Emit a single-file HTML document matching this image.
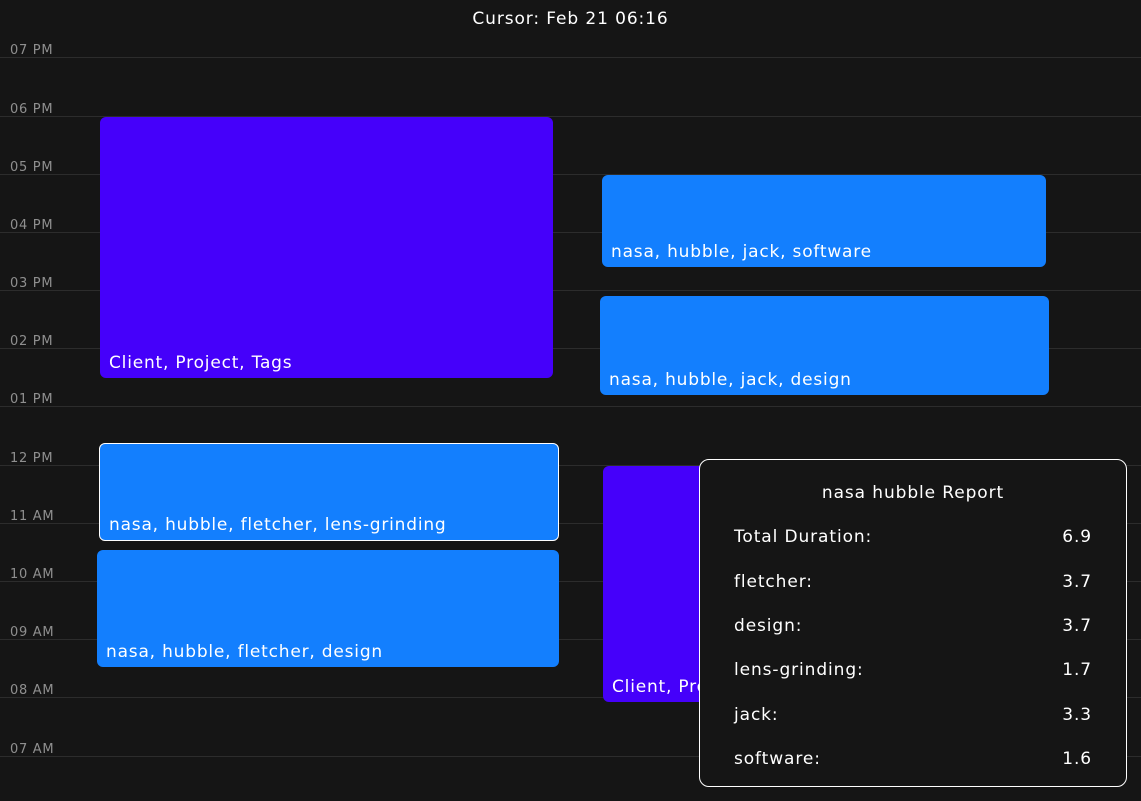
<!DOCTYPE html>
<html><head><style>
body{margin:0;width:1141px;height:801px;background:#151515;overflow:hidden;position:relative;font-family:"DejaVu Sans","Liberation Sans",sans-serif;}
.t{position:absolute;left:0;width:1141px;top:9px;text-align:center;color:#fff;font-size:17px;letter-spacing:0.9px;}
.l{position:absolute;left:0;width:1141px;height:1px;background:#2c2c2c;}
.lb{position:absolute;left:10px;color:#8f8f8f;font-size:13px;letter-spacing:0.7px;}
.b{position:absolute;border-radius:6px;color:#fff;font-size:17px;box-sizing:border-box;letter-spacing:0.8px;}
.b span{position:absolute;left:9px;bottom:5px;white-space:nowrap;}
.p{background:#4500fa}.c{background:#137ffe}
.tip{position:absolute;left:699px;top:459px;width:428px;height:328px;box-sizing:border-box;border:1px solid #fff;border-radius:10px;background:#151515;color:#fff;font-size:17px;letter-spacing:0.9px;}
.r{position:absolute;left:34px;right:34px;}
.r b{font-weight:normal;position:absolute;right:0;top:0;}
</style></head><body>
<div class="t">Cursor: Feb 21 06:16</div>
<div class="l" style="top:57px"></div><div class="lb" style="top:43px">07 PM</div>
<div class="l" style="top:116px"></div><div class="lb" style="top:102px">06 PM</div>
<div class="l" style="top:174px"></div><div class="lb" style="top:160px">05 PM</div>
<div class="l" style="top:232px"></div><div class="lb" style="top:218px">04 PM</div>
<div class="l" style="top:290px"></div><div class="lb" style="top:276px">03 PM</div>
<div class="l" style="top:348px"></div><div class="lb" style="top:334px">02 PM</div>
<div class="l" style="top:406px"></div><div class="lb" style="top:392px">01 PM</div>
<div class="l" style="top:465px"></div><div class="lb" style="top:451px">12 PM</div>
<div class="l" style="top:523px"></div><div class="lb" style="top:509px">11 AM</div>
<div class="l" style="top:581px"></div><div class="lb" style="top:567px">10 AM</div>
<div class="l" style="top:639px"></div><div class="lb" style="top:625px">09 AM</div>
<div class="l" style="top:697px"></div><div class="lb" style="top:683px">08 AM</div>
<div class="l" style="top:756px"></div><div class="lb" style="top:742px">07 AM</div>

<div class="b p" style="left:100px;top:117px;width:453px;height:261px"><span>Client, Project, Tags</span></div>
<div class="b c" style="left:602px;top:175px;width:444px;height:92px"><span>nasa, hubble, jack, software</span></div>
<div class="b c" style="left:600px;top:296px;width:449px;height:99px"><span>nasa, hubble, jack, design</span></div>
<div class="b c" style="left:99px;top:443px;width:460px;height:98px;border:1px solid #fff"><span>nasa, hubble, fletcher, lens-grinding</span></div>
<div class="b c" style="left:97px;top:550px;width:462px;height:117px"><span>nasa, hubble, fletcher, design</span></div>
<div class="b p" style="left:603px;top:466px;width:120px;height:236px;overflow:hidden"><span>Client, Project</span></div>

<div class="tip">
<div style="position:absolute;left:0;right:0;top:23px;text-align:center">nasa hubble Report</div>
<div class="r" style="top:67px">Total Duration:<b>6.9</b></div>
<div class="r" style="top:112px">fletcher:<b>3.7</b></div>
<div class="r" style="top:156px">design:<b>3.7</b></div>
<div class="r" style="top:200px">lens-grinding:<b>1.7</b></div>
<div class="r" style="top:245px">jack:<b>3.3</b></div>
<div class="r" style="top:289px">software:<b>1.6</b></div>
</div>
</body></html>
